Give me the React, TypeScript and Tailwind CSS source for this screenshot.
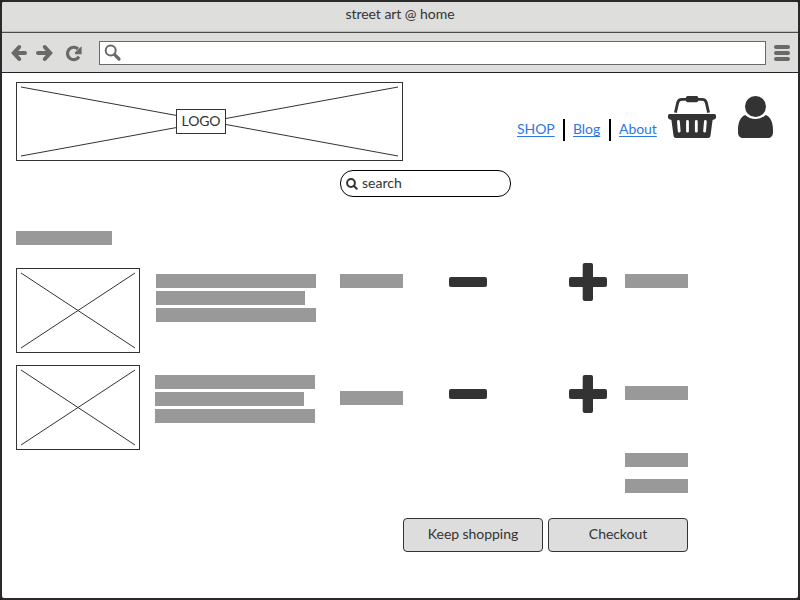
import React from "react";

function Bar({ className = "" }: { className?: string }) {
  return <div className={`h-3.5 shrink-0 bg-[#999999] ${className}`} />;
}

function ImageBox({ className = "" }: { className?: string }) {
  return (
    <div className={`h-[85px] w-[124px] shrink-0 border border-[#333333] ${className}`}>
      <svg width="122" height="83" viewBox="0 0 122 83" stroke="#333333" strokeWidth="1">
        <path d="M4 4L118 79M118 4L4 79" />
      </svg>
    </div>
  );
}

function Minus({ className = "" }: { className?: string }) {
  return <div className={`h-2.5 w-[38px] shrink-0 rounded-[2px] bg-[#333333] ${className}`} />;
}

function Plus({ className = "" }: { className?: string }) {
  return (
    <svg className={`shrink-0 ${className}`} width="38" height="38" viewBox="0 0 38 38" fill="#333333">
      <rect x="0" y="14" width="38" height="10" rx="2" />
      <rect x="13.7" y="0" width="10.3" height="38" rx="2" />
    </svg>
  );
}

function Lines({ className = "" }: { className?: string }) {
  return (
    <div className={`flex w-40 shrink-0 flex-col gap-[3px] ${className}`}>
      <Bar />
      <Bar className="w-[149px]" />
      <Bar />
    </div>
  );
}

function Basket() {
  return (
    <svg className="mt-[14px] ml-[10px] shrink-0" width="48" height="42" viewBox="0 0 48 42">
      <path d="M7.4 16.6L9.7 6.6Q10.5 3.3 14 3.3H34Q37.5 3.3 38.3 6.6L40.6 16.6" fill="none" stroke="#333333" strokeWidth="2.8" />
      <rect x="18" y="0" width="12.2" height="6.2" rx="1.6" fill="#333333" />
      <path
        fill="#333333"
        d="M1.5 18H46.5Q48 18 48 19.6V21.3Q48 22.7 46.7 23.2L44.6 24L42.4 40.2Q42.1 42 40.2 42H7.8Q5.9 42 5.6 40.2L3.4 24L1.3 23.2Q0 22.7 0 21.3V19.6Q0 18 1.5 18Z"
      />
      <path d="M10.4 25.5L11.2 35.2M19.5 25.5V35.2M28.3 25.5V35.2M37.4 25.5L36.6 35.2" stroke="#ffffff" strokeWidth="2.8" strokeLinecap="round" />
    </svg>
  );
}

function User() {
  return (
    <svg className="mt-[14px] ml-[22px] shrink-0" width="35" height="42" viewBox="0 0 35 42" fill="#333333">
      <circle cx="17.5" cy="10.5" r="10.5" />
      <path d="M7.3 19C10 21.5 13.5 22.9 17.5 22.9S25 21.5 27.7 19C32.5 20.5 35 26.5 35 34V36C35 40 33 42 29.5 42H5.5C2 42 0 40 0 36V34C0 26.5 2.5 20.5 7.3 19Z" />
    </svg>
  );
}

function Browser() {
  return (
    <header className="bg-[#dededc] text-[#696969]">
      <div className="h-[31px] border-b border-[#4b4b4b]">
        <div className="h-[30px] border-b border-[#bdbdbb] pt-[3px] text-center text-sm leading-[18px] tracking-[-0.05px] text-[#333333]">
          street art @ home
        </div>
      </div>
      <div className="flex h-10 items-center border-b border-[#222222] pl-[9px]">
        <svg width="72" height="18" viewBox="0 0 72 18" fill="none" stroke="currentColor" strokeWidth="4" strokeLinecap="round" strokeLinejoin="miter">
          <path d="M8.2 3L2.8 9L8.2 15M3.5 9H14" />
          <path d="M33.8 3L39.2 9L33.8 15M38.5 9H27" />
          <path d="M68 12.6A6.2 6.2 0 1 1 67 5" strokeWidth="3.2" strokeLinecap="butt" />
          <path d="M70.6 2.3V10.2H64.2L63.8 8.4Z" fill="currentColor" stroke="none" />
        </svg>
        <div className="ml-4 flex h-6 w-[667px] items-center border border-[#696969] bg-white pl-1">
          <svg width="18" height="18" viewBox="0 0 18 18" fill="none" stroke="currentColor">
            <circle cx="6.7" cy="6.5" r="5" strokeWidth="2" />
            <path d="M10.6 10.6L15 15" strokeWidth="3.2" strokeLinecap="round" />
          </svg>
        </div>
        <div className="ml-2 flex w-4 flex-col gap-0.5">
          <div className="h-1 rounded-full bg-[#696969]" />
          <div className="h-1 rounded-full bg-[#696969]" />
          <div className="h-1 rounded-full bg-[#696969]" />
        </div>
      </div>
    </header>
  );
}

function Logo() {
  return (
    <div className="grid h-[79px] w-[387px] shrink-0 items-center border border-[#333333]">
      <svg className="col-start-1 row-start-1" width="385" height="77" viewBox="0 0 385 77" stroke="#333333">
        <path d="M4 4L381 73M381 4L4 73" />
      </svg>
      <div className="z-10 col-start-1 row-start-1 ml-[159px] h-[25px] w-[50px] border border-[#333333] bg-white text-center text-sm leading-[22px] tracking-[-0.1px]">
        LOGO
      </div>
    </div>
  );
}

function Nav() {
  const link = "mb-0.5 text-[#2b78e4] underline decoration-1 underline-offset-2 [text-decoration-skip-ink:none]";
  return (
    <nav className="mt-9 ml-[114px] flex h-[23px] w-[141px] shrink-0 items-center text-sm leading-5 tracking-[-0.05px]">
      <a className={`w-[38px] ${link}`}>SHOP</a>
      <span className="mx-2 h-[22px] w-0.5 bg-black" />
      <a className={`w-7 ${link}`}>Blog</a>
      <span className="mx-2 h-[22px] w-0.5 bg-black" />
      <a className={link}>About</a>
    </nav>
  );
}

export default function App() {
  const button = "h-[34px] w-[140px] rounded-[4px] border border-[#333333] bg-[#dddddd] pb-0.5 text-sm tracking-[-0.05px]";
  return (
    <div className="h-[600px] w-[800px] bg-[#231f20]">
      <div className="h-full overflow-hidden rounded-[4px] border-2 border-[#2b2929] bg-white font-['Lato','Liberation_Sans',sans-serif] text-[#333333]">
        <Browser />
        <main className="px-3.5 pt-[9px]">
          <div className="flex h-[79px] items-start">
            <Logo />
            <Nav />
            <Basket />
            <User />
          </div>
          <div className="mt-[9px] ml-[324px] flex h-[27px] w-[171px] items-center rounded-[13px] border border-black pl-[5px] text-sm">
            <svg width="12" height="12" viewBox="0 0 12 12" fill="none" stroke="#333333" strokeWidth="2">
              <circle cx="5" cy="5" r="3.9" />
              <path d="M7.8 7.8L10.7 10.7" strokeLinecap="round" />
            </svg>
            <span className="mb-0.5 ml-1 leading-5">search</span>
          </div>
          <Bar className="mt-[34px] w-24" />
          <div className="mt-[18px] flex h-[90px] items-start">
            <ImageBox className="mt-[5px]" />
            <Lines className="mt-[11px] ml-4" />
            <Bar className="mt-[11px] ml-6 w-[63px]" />
            <Minus className="mt-3.5 ml-[46px]" />
            <Plus className="ml-[82px]" />
            <Bar className="mt-[11px] ml-[18px] w-[63px]" />
          </div>
          <div className="mt-3 flex h-[85px] items-start">
            <ImageBox />
            <Lines className="mt-2.5 ml-[15px]" />
            <Bar className="mt-[26px] ml-[25px] w-[63px]" />
            <Minus className="mt-6 ml-[46px]" />
            <Plus className="mt-2.5 ml-[82px]" />
            <Bar className="mt-[21px] ml-[18px] w-[63px]" />
          </div>
          <div className="mt-[3px] flex w-[672px] flex-col items-end gap-3">
            <Bar className="w-[63px]" />
            <Bar className="w-[63px]" />
          </div>
          <div className="mt-[25px] flex w-[672px] justify-end gap-[5px]">
            <button className={button}>Keep shopping</button>
            <button className={button}>Checkout</button>
          </div>
        </main>
      </div>
    </div>
  );
}
